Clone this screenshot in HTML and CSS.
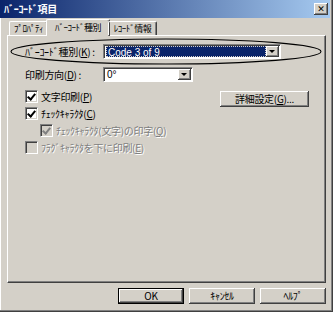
FILE: index.html
```html
<!DOCTYPE html>
<html lang="ja">
<head>
<meta charset="utf-8">
<link rel="stylesheet" href="styles.css">
</head>
<body>
<div class="window">
  <div class="titlebar">
    <span class="title">ﾊﾞｰｺｰﾄﾞ項目</span>
    <span class="close">✕</span>
  </div>
  <div class="content">
    <div class="tabs">
      <div class="tab t1">ﾌﾟﾛﾊﾟﾃｨ</div>
      <div class="tab t2 active">ﾊﾞｰｺｰﾄﾞ種別</div>
      <div class="tab t3">ﾚｺｰﾄﾞ情報</div>
    </div>
    <div class="panel">
      <svg class="ring" width="318" height="32" viewBox="0 0 318 32"><ellipse cx="158" cy="15.5" rx="155" ry="12.5" fill="none" stroke="#000" stroke-width="1.1"/></svg>
      <div class="row">
        <span class="label">ﾊﾞｰｺｰﾄﾞ種別(<u>K</u>) :</span>
        <div class="combo wide">
          <div class="value selected"><span class="focus">Code 3 of 9</span></div>
          <div class="drop"><span class="arrow"></span></div>
        </div>
      </div>
      <div class="row row2">
        <span class="label">印刷方向(<u>D</u>) :</span>
        <div class="combo narrow">
          <div class="value">0°</div>
          <div class="drop"><span class="arrow"></span></div>
        </div>
      </div>
      <div class="lower">
        <div class="checks">
          <div class="check"><span class="box on"></span><span>文字印刷(<u>P</u>)</span></div>
          <div class="check"><span class="box on"></span><span>ﾁｪｯｸｷｬﾗｸﾀ(<u>C</u>)</span></div>
          <div class="check sub disabled"><span class="box on"></span><span>ﾁｪｯｸｷｬﾗｸﾀ(文字)の印字(<u>Q</u>)</span></div>
          <div class="check disabled"><span class="box"></span><span>ﾌﾗｸﾞｷｬﾗｸﾀを下に印刷(<u>E</u>)</span></div>
        </div>
        <div class="btn detail">詳細設定(<u>G</u>)...</div>
      </div>
    </div>
    <div class="buttons">
      <div class="btn default">OK</div>
      <div class="btn">ｷｬﾝｾﾙ</div>
      <div class="btn">ﾍﾙﾌﾟ</div>
    </div>
  </div>
</div>
</body>
</html>
```
FILE: styles.css
```css
html, body {
  margin: 0;
  padding: 0;
  background: #d4d0c8;
}
body {
  font-family: "Noto Sans CJK JP", "Liberation Sans", sans-serif;
  font-size: 10px;
  letter-spacing: -0.3px;
  color: #000;
}
u { text-decoration: underline; }
.window {
  position: relative;
  width: 333px;
  height: 312px;
  box-sizing: border-box;
  background: #d4d0c8;
  box-shadow: inset -1px -1px #404040, inset -2px -2px #808080, inset 1px 0 #fff;
  overflow: hidden;
}
.titlebar {
  height: 18px;
  margin-right: 3px;
  display: flex;
  align-items: center;
  background: linear-gradient(to right, #0a246a, #a6caf0);
}
.title {
  color: #fff;
  font-weight: bold;
  font-size: 10px;
  line-height: 18px;
  padding-left: 4px;
  flex: 1;
}
.close {
  width: 14px;
  height: 12px;
  margin-right: 2px;
  background: #d4d0c8;
  box-shadow: inset -1px -1px #404040, inset 1px 1px #fff, inset -2px -2px #808080;
  font-size: 9px;
  font-weight: bold;
  line-height: 12px;
  text-align: center;
  letter-spacing: 0;
  font-family: "DejaVu Sans", sans-serif;
}
.content {
  padding: 1px 7px 0 7px;
}
.tabs {
  display: flex;
  height: 16px;
  padding-left: 2px;
  align-items: flex-end;
  position: relative;
  z-index: 1;
}
.tab {
  height: 14px;
  line-height: 13px;
  box-sizing: border-box;
  display: flex;
  justify-content: center;
  font-size: 9px;
  letter-spacing: -0.5px;
  border-top: 1px solid #fff;
  border-left: 1px solid #fff;
  border-right: 1px solid #404040;
  box-shadow: inset -1px 0 #808080;
  border-radius: 2px 2px 0 0;
  white-space: nowrap;
}
.t1 { width: 39px; }
.t2 { width: 64px; }
.t3 { width: 49px; }
.tab.active {
  height: 17px;
  margin: 0 -2px -1px;
  background: #d4d0c8;
  line-height: 15px;
}
.panel {
  position: relative;
  height: 248px;
  box-sizing: border-box;
  border-top: 1px solid #fff;
  border-left: 1px solid #fff;
  border-right: 1px solid #404040;
  border-bottom: 1px solid #404040;
  box-shadow: inset -1px -1px #808080;
  padding: 8px 16px 0 17px;
}
.ring {
  position: absolute;
  left: 0;
  top: 0;
}
.row {
  display: flex;
  align-items: center;
  height: 15px;
}
.row2 {
  margin-top: 8px;
}
.label {
  width: 78px;
  white-space: nowrap;
  line-height: 14px;
}
.combo {
  display: flex;
  height: 15px;
  box-sizing: border-box;
  background: #fff;
  border-top: 1px solid #808080;
  border-left: 1px solid #808080;
  border-right: 1px solid #fff;
  border-bottom: 1px solid #fff;
  box-shadow: inset 1px 1px #404040;
  padding: 1px 1px 1px 2px;
}
.combo.wide { width: 178px; }
.combo.narrow { width: 90px; }
.value {
  flex: 1;
  line-height: 11px;
  font-size: 10px;
  padding-left: 1px;
  letter-spacing: 0;
  white-space: nowrap;
  overflow: hidden;
}
.value.selected {
  background: #0a246a;
  color: #fff;
  outline: 1px dotted #d4d0c8;
  outline-offset: -1px;
}
.focus {
  font-family: "Liberation Sans", sans-serif;
  font-size: 10px;
  padding-left: 1px;
}
.narrow .value {
  font-family: "Liberation Sans", sans-serif;
}
.drop {
  width: 13px;
  background: #d4d0c8;
  box-shadow: inset -1px -1px #404040, inset 1px 1px #fff, inset -2px -2px #808080;
  display: flex;
  align-items: center;
  justify-content: center;
}
.arrow {
  width: 0;
  height: 0;
  border-left: 3px solid transparent;
  border-right: 3px solid transparent;
  border-top: 3px solid #000;
  margin-left: -1px;
}
.lower {
  display: flex;
  justify-content: space-between;
  margin-top: 8px;
}
.checks {
  display: flex;
  flex-direction: column;
  gap: 4px;
}
.check {
  display: flex;
  align-items: center;
  gap: 3px;
  height: 13px;
  line-height: 13px;
  white-space: nowrap;
}
.check.sub { margin-left: 15px; }
.box {
  width: 11px;
  height: 11px;
  background: #fff;
  border-top: 1px solid #808080;
  border-left: 1px solid #808080;
  border-right: 1px solid #fff;
  border-bottom: 1px solid #fff;
  box-shadow: inset 1px 1px #404040, inset -1px -1px #d4d0c8;
  position: relative;
}
.box.on::after {
  content: "";
  position: absolute;
  left: 3px;
  top: 1px;
  width: 3px;
  height: 6px;
  border-right: 2px solid #000;
  border-bottom: 2px solid #000;
  transform: rotate(40deg);
}
.disabled { color: #808080; text-shadow: 1px 1px #fff; }
.disabled .box { background: #d4d0c8; }
.disabled .box.on::after { border-color: #808080; }
.btn {
  height: 16px;
  box-sizing: border-box;
  background: #d4d0c8;
  box-shadow: inset -1px -1px #404040, inset 1px 1px #fff, inset -2px -2px #808080;
  text-align: center;
  line-height: 16px;
  white-space: nowrap;
}
.detail {
  width: 89px;
  margin-top: 1px;
}
.buttons {
  display: flex;
  justify-content: flex-end;
  gap: 5px;
  margin-top: 5px;
}
.buttons .btn {
  width: 66px;
}
.buttons .btn.default {
  box-shadow: inset 0 0 0 1px #000, inset -2px -2px #404040, inset 2px 2px #fff, inset -3px -3px #808080;
}
```
